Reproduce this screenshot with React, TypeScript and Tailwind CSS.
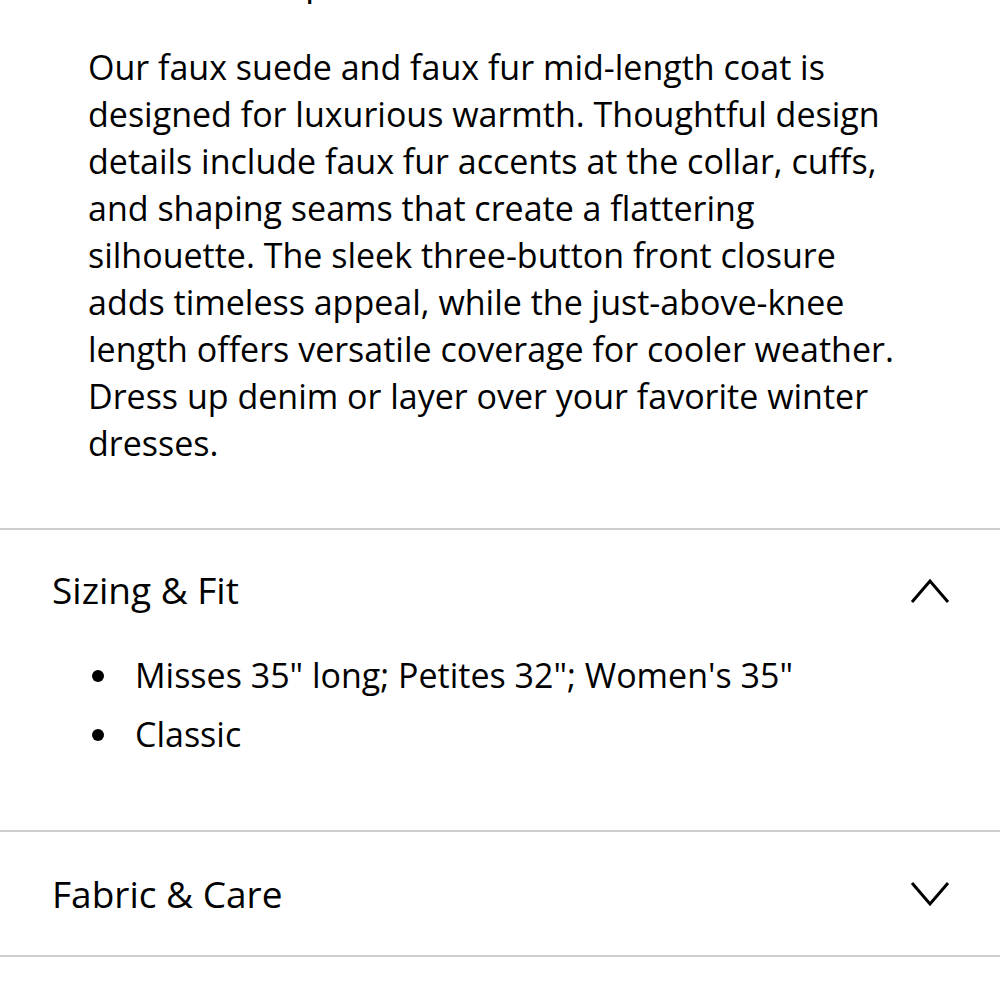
import React from "react";

const para = [
  "Our faux suede and faux fur mid-length coat is",
  "designed for luxurious warmth. Thoughtful design",
  "details include faux fur accents at the collar, cuffs,",
  "and shaping seams that create a flattering",
  "silhouette. The sleek three-button front closure",
  "adds timeless appeal, while the just-above-knee",
  "length offers versatile coverage for cooler weather.",
  "Dress up denim or layer over your favorite winter",
  "dresses.",
];

function Chevron({ up }: { up?: boolean }) {
  return (
    <svg width="40" height="28" viewBox="0 0 40 28" fill="none" className="block">
      {up ? (
        <polyline points="2,26 20,5 38,26" stroke="#000" strokeWidth="3" strokeLinejoin="miter" />
      ) : (
        <polyline points="2,3 20,24 38,3" stroke="#000" strokeWidth="3" strokeLinejoin="miter" />
      )}
    </svg>
  );
}

export default function App() {
  return (
    <div
      className="w-[1000px] h-[1000px] overflow-hidden bg-white text-black [font-variant-ligatures:none]"
      style={{ fontFamily: "'Open Sans', Lato, sans-serif" }}
    >
      <div className="h-[44px] overflow-hidden relative">
        <div className="absolute left-[52px] top-[-41px] text-[37px] leading-[44px] font-medium">
          Product Description
        </div>
      </div>
      <div className="pl-[88px] text-[34px] leading-[47px] pb-[61px]">
        {para.map((l, i) => (
          <div key={i} className="whitespace-nowrap">{l}</div>
        ))}
      </div>
      <div className="h-[2px] bg-[#cfcfcf]" />
      <div className="h-[120px] flex items-center justify-between pl-[52px] pr-[50px]">
        <span className="text-[37px] font-medium">Sizing &amp; Fit</span>
        <Chevron up />
      </div>
      <ul className="text-[34px] leading-[59px] pl-[92px] -mt-[4px] pb-[66px]">
        <li className="flex items-center">
          <span className="w-[17px] h-[12px] flex items-center"><span className="w-[12px] h-[12px] rounded-full bg-black" /></span>
          <span className="ml-[26px]">Misses 35" long; Petites 32"; Women's 35"</span>
        </li>
        <li className="flex items-center">
          <span className="w-[17px] h-[12px] flex items-center"><span className="w-[12px] h-[12px] rounded-full bg-black" /></span>
          <span className="ml-[26px]">Classic</span>
        </li>
      </ul>
      <div className="h-[2px] bg-[#cfcfcf]" />
      <div className="h-[123px] flex items-center justify-between pl-[52px] pr-[50px]">
        <span className="text-[37px] font-medium">Fabric &amp; Care</span>
        <Chevron />
      </div>
      <div className="h-[2px] bg-[#cfcfcf]" />
    </div>
  );
}
